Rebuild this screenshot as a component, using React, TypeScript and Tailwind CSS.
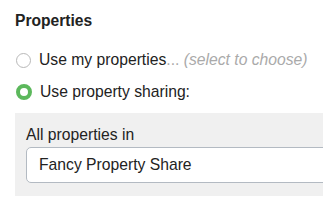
export default function App() {
  return (
    <div
      className="h-[204px] w-[323px] overflow-hidden bg-white text-[#222]"
      style={{ fontFamily: '"Liberation Sans", Arial, sans-serif' }}
    >
      <div className="w-[380px] pl-[15px] pt-[11px]">
        <h2 className="text-[15.6px] font-bold leading-[20px]">Properties</h2>

        <div className="mt-[18.5px] flex flex-col gap-[12px]">
          <label className="flex h-[20px] items-center gap-[8px] pl-[1px] text-[15.7px] leading-[20px]">
            <span className="mt-[2px] h-[15px] w-[15px] rounded-full border border-[#b8b8b8] bg-white" />
            <span>
              Use my properties<span className="text-[#aaa]">...</span>{" "}
              <span className="italic text-[#aaa]">(select to choose)</span>
            </span>
          </label>
          <label className="flex h-[20px] items-center gap-[8px] pl-[1px] text-[15.7px] leading-[20px]">
            <span className="h-[16px] w-[16px] rounded-full border-[4.5px] border-[#5cb85c] bg-white" />
            <span>Use property sharing:</span>
          </label>
        </div>

        <div className="mt-[11.5px] bg-[#f0f0f0] pl-[11px] pt-[11.5px] pb-[13px]">
          <div className="text-[15.7px] leading-[20px]">All properties in</div>
          <div className="mt-[2.5px] flex h-[36px] items-center rounded-[5px] border border-[#b3bac2] bg-white px-[12px] text-[15.7px]">
            Fancy Property Share
          </div>
        </div>
      </div>
    </div>
  );
}
